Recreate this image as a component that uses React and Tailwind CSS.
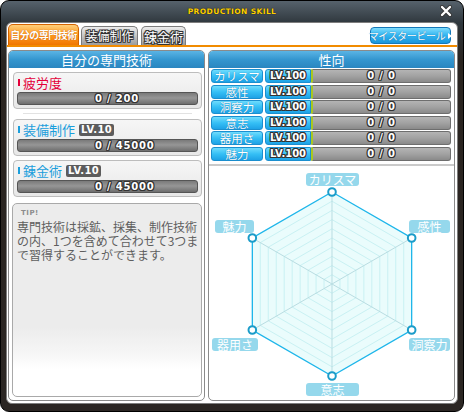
import { useMemo } from 'react'

const stats = ['カリスマ', '感性', '洞察力', '意志', '器用さ', '魅力']

const chartLabels = [
  { name: 'カリスマ', cls: 'left-[97px] top-[7px] w-[53px]' },
  { name: '感性', cls: 'left-[200px] top-[54px] w-[41px]' },
  { name: '洞察力', cls: 'left-[200px] top-[172px] w-[41px]' },
  { name: '意志', cls: 'left-[97px] top-[217px] w-[53px]' },
  { name: '器用さ', cls: 'left-[3px] top-[172px] w-[46px]' },
  { name: '魅力', cls: 'left-[6px] top-[54px] w-[39px]' },
]

const outline = '[text-shadow:1px_0_0_#333,-1px_0_0_#333,0_1px_0_#333,0_-1px_0_#333,1px_1px_0_#333,-1px_-1px_0_#333,1px_-1px_0_#333,-1px_1px_0_#333]'

function hexPoints(cx, cy, r) {
  const pts = []
  for (let i = 0; i < 6; i++) {
    const a = ((-90 + i * 60) * Math.PI) / 180
    pts.push([cx + r * Math.cos(a), cy + r * Math.sin(a)])
  }
  return pts
}

function Radar() {
  const cx = 123
  const cy = 118
  const R = 92
  const outer = useMemo(() => hexPoints(cx, cy, R), [])
  const rings = [1, 2, 3, 4, 5, 6, 7, 8, 9].map(k => hexPoints(cx, cy, (R * k) / 10))
  const toStr = pts => pts.map(p => p.join(',')).join(' ')

  return (
    <div className="relative w-[246px] h-[233px]">
      <svg width="246" height="233" className="absolute left-0 top-0">
        <polygon points={toStr(outer)} fill="#eafcfc" />
        {rings.map((r, i) => (
          <polygon key={i} points={toStr(r)} fill="none" stroke="#c9f1f3" strokeWidth="1" />
        ))}
        {outer.map((p, i) => (
          <line key={i} x1={cx} y1={cy} x2={p[0]} y2={p[1]} stroke="#b9dde2" strokeWidth="1" />
        ))}
        <polygon points={toStr(outer)} fill="none" stroke="#1fb6ea" strokeWidth="1.3" />
        {outer.map((p, i) => (
          <circle key={i} cx={p[0]} cy={p[1]} r="3.8" fill="#fff" stroke="#1a9cc9" strokeWidth="2" />
        ))}
      </svg>
      {chartLabels.map(l => (
        <div
          key={l.name}
          className={`absolute ${l.cls} h-[13px] rounded-[3px] bg-[#95d8ec] text-white text-[12px] leading-[13px] text-center whitespace-nowrap`}
        >
          {l.name}
        </div>
      ))}
    </div>
  )
}

function SkillCard({ name, color, marker, lv, value }) {
  return (
    <div className="h-[37px] rounded-[4px] border border-[#bdbdbd] bg-[linear-gradient(to_bottom,#f6f6f6,#e8e8e8)] px-[3px] pt-[2px]">
      <div className="flex items-center h-[15px]">
        <span className={`ml-[1px] w-[2px] h-[7px] ${marker}`} />
        <span className={`ml-[3px] text-[13px] leading-[15px] ${color}`}>{name}</span>
        {lv && (
          <span className="ml-[4px] h-[12px] px-[2px] rounded-[2px] bg-[#5c5c5c] text-white font-['DejaVu_Sans',sans-serif] font-bold text-[10px] leading-[12px] tracking-[0.4px]">
            LV.10
          </span>
        )}
      </div>
      <div className="mt-[2px] h-[13px] rounded-[3px] border border-[#555] bg-[linear-gradient(to_bottom,#7a7a7a,#969696_45%,#6e6e6e)] pl-[77px]">
        <span className={`block text-white font-['DejaVu_Sans',sans-serif] font-bold text-[10px] leading-[11px] tracking-[0.8px] ${outline}`}>
          {value}
        </span>
      </div>
    </div>
  )
}

export default function App() {
  return (
    <div className="w-[464px] h-[412px] overflow-hidden rounded-[9px] border border-black bg-[linear-gradient(to_bottom,#56626c_0px,#2f373d_22px,#2a2420_60px,#2b2623)] font-['Noto_Sans_CJK_JP',sans-serif] flex flex-col">
      {/* Title bar */}
      <div className="relative h-[21px] flex items-center justify-center">
        <span className="text-[#ffd200] font-['DejaVu_Sans',sans-serif] font-bold text-[7.5px] tracking-[0.4px] leading-none [text-shadow:0_0_1px_#000]">
          PRODUCTION SKILL
        </span>
        <svg width="12" height="12" viewBox="0 0 12 12" className="absolute right-[11px] top-[4px]">
          <path d="M2 2 L10 10 M10 2 L2 10" stroke="#333" strokeWidth="4" strokeLinecap="round" />
          <path d="M2 2 L10 10 M10 2 L2 10" stroke="#fff" strokeWidth="2.4" strokeLinecap="round" />
        </svg>
      </div>

      {/* White body */}
      <div className="ml-[5px] w-[452px] h-[382px] rounded-[6px] border border-[#7e7e7e] bg-white flex flex-col">
        {/* Tabs */}
        <div className="h-[22px] flex items-end pl-[1px]">
          <div className="w-[71px] h-[21px] rounded-t-[5px] border border-b-0 border-[#d46400] bg-[linear-gradient(to_bottom,#ffcf7a,#ff9a20_50%,#f07600)] flex items-center justify-center">
            <span className="text-white text-[10px] tracking-[-0.5px] font-bold leading-none whitespace-nowrap [text-shadow:0_0_1px_#b85000]">自分の専門技術</span>
          </div>
          <div className="ml-[2px] w-[57px] h-[19px] rounded-t-[5px] border border-b-0 border-[#7c7c7c] bg-[linear-gradient(to_bottom,#ececec,#c4c4c4_50%,#9c9c9c)] flex items-center justify-center">
            <span className={`text-white text-[12px] leading-none ${outline}`}>装備制作</span>
          </div>
          <div className="ml-[3px] w-[45px] h-[19px] rounded-t-[5px] border border-b-0 border-[#7c7c7c] bg-[linear-gradient(to_bottom,#ececec,#c4c4c4_50%,#9c9c9c)] flex items-center justify-center">
            <span className={`text-white text-[13px] leading-none ${outline}`}>錬金術</span>
          </div>
          <div className="ml-auto mr-[6px] self-start mt-[4px] w-[81px] h-[17px] rounded-[4px] border border-[#1477b8] bg-[linear-gradient(to_bottom,#7fdcfc,#30b4f0_50%,#1a96dc)] flex items-center justify-center gap-[3px]">
            <span className="text-white text-[10px] tracking-[-0.4px] leading-none whitespace-nowrap [text-shadow:0_0_1px_#0a5a90]">マイスタービール</span>
            <span className="w-0 h-0 border-y-[3.5px] border-y-transparent border-l-[4px] border-l-white" />
          </div>
        </div>
        <div className="h-[2px] bg-[#f18b00]" />

        {/* Panels */}
        <div className="flex-1 flex gap-[3px] pt-[3px] pl-[1px] pb-[2px]">
          {/* Left */}
          <div className="w-[197px] rounded-[5px] border border-[#8a8a8a] bg-white flex flex-col">
            <div className="h-[17px] rounded-t-[4px] bg-[linear-gradient(to_bottom,#5ab4e4,#3496cf_50%,#2a86c0)] text-white text-[13px] leading-[17px] text-center">
              自分の専門技術
            </div>
            <div className="flex-1 flex flex-col pl-[4px] pr-[2px] pt-[4px] pb-[3px]">
              <SkillCard name="疲労度" color="text-[#e4003a]" marker="bg-[#e4003a]" value="0 / 200" />
              <div className="mt-[4px] mb-[5px] mx-[10px] h-[1px] bg-[#e2e2e2]" />
              <SkillCard name="装備制作" color="text-[#1a9edc]" marker="bg-[#1a9edc]" lv value="0 / 45000" />
              <div className="mt-[4px]">
                <SkillCard name="錬金術" color="text-[#1a9edc]" marker="bg-[#1a9edc]" lv value="0 / 45000" />
              </div>
              <div className="mt-[6px] -ml-[1px] flex-1 rounded-[5px] border border-[#a9a9a9] bg-[linear-gradient(to_bottom,#ececec_0%,#ececec_64%,#f6f6f6_78%,#ffffff_86%)] pl-[4px] pt-[5px]">
                <div className="font-['DejaVu_Sans',sans-serif] font-bold text-[7px] leading-[8px] text-[#8c8c8c] ml-[4px] tracking-[0.5px]">TIP!</div>
                <div className="mt-[3px] flex flex-col text-[12px] leading-[14px] text-[#5e5e5e] whitespace-nowrap">
                  <span className="h-[14px]">専門技術は採鉱、採集、制作技術</span>
                  <span className="h-[14px]">の内、1つを含めて合わせて3つま</span>
                  <span className="h-[14px]">で習得することができます。</span>
                </div>
              </div>
            </div>
          </div>

          {/* Right */}
          <div className="w-[247px] rounded-[5px] border border-[#8a8a8a] bg-white flex flex-col">
            <div className="h-[17px] rounded-t-[4px] bg-[linear-gradient(to_bottom,#5ab4e4,#3496cf_50%,#2a86c0)] text-white text-[13px] leading-[17px] text-center">
              性向
            </div>
            <div className="flex flex-col gap-[1.6px] pt-[1px] pl-[2px] pr-[3px]">
              {stats.map(s => (
                <div key={s} className="flex h-[14px]">
                  <div className="w-[52px] rounded-[3px] border border-[#1b8fcf] bg-[linear-gradient(to_bottom,#6fdcfd,#35bff5_50%,#1ea2e6)] flex items-center justify-center">
                    <span className="text-white text-[11.5px] leading-[12px] whitespace-nowrap [text-shadow:0_0_1px_#0a6aa0]">{s}</span>
                  </div>
                  <div className="ml-[2px] w-[46px] rounded-l-[3px] border border-[#1b8fcf] bg-[linear-gradient(to_bottom,#6fdcfd,#35bff5_50%,#1ea2e6)] flex items-center justify-center">
                    <span className={`text-white font-['DejaVu_Sans',sans-serif] font-bold text-[10px] leading-none ${outline}`}>LV.100</span>
                  </div>
                  <div className="flex-1 rounded-r-[3px] border border-l-2 border-[#6e6e6e] border-l-[#a8c820] bg-[linear-gradient(to_bottom,#b4b4b4,#a2a2a2_50%,#8a8a8a)] flex items-center justify-center">
                    <span className={`text-white font-['DejaVu_Sans',sans-serif] font-bold text-[10px] leading-none tracking-[0.8px] ${outline}`}>0 / 0</span>
                  </div>
                </div>
              ))}
            </div>
            <div className="mt-[3px] h-[2px] bg-[#cacaca]" />
            <Radar />
          </div>
        </div>
      </div>
    </div>
  )
}
